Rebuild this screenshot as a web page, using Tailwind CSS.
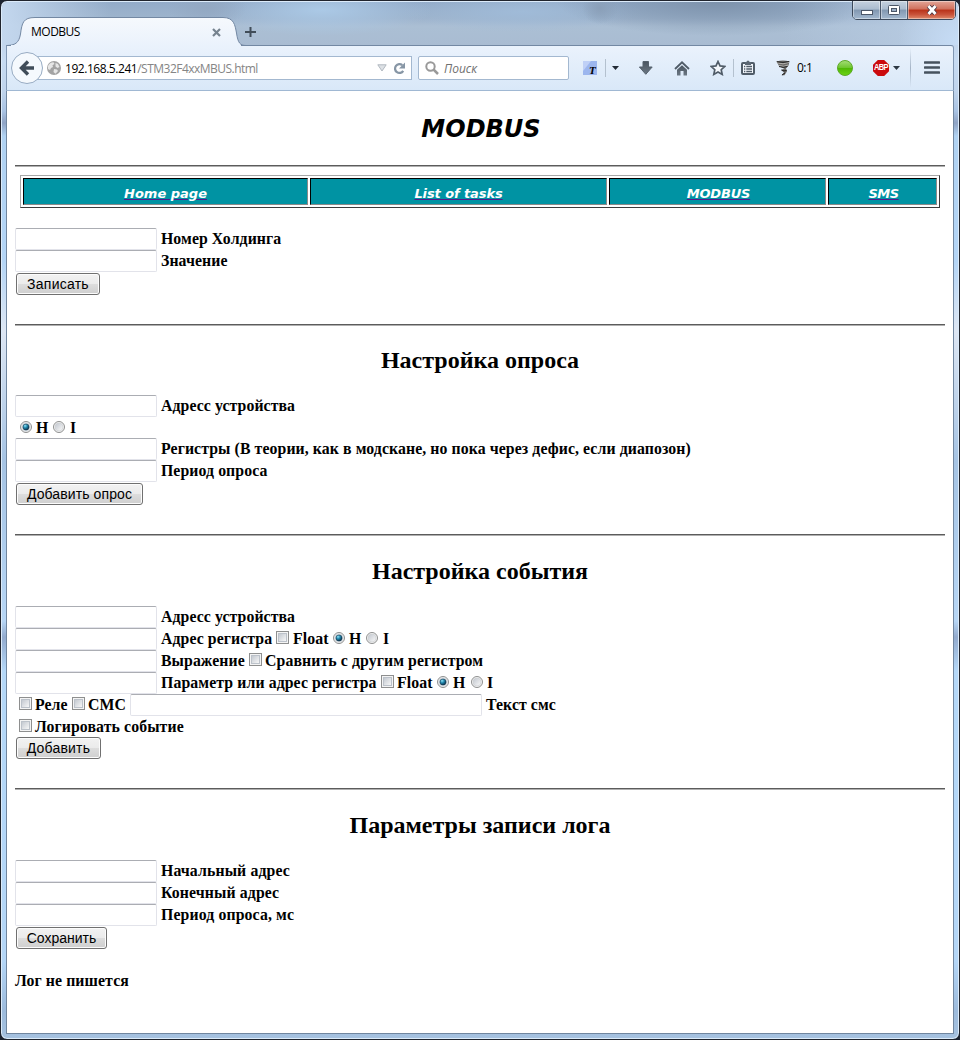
<!DOCTYPE html>
<html lang="ru">
<head>
<meta charset="utf-8">
<title>MODBUS</title>
<script src="https://cdn.jsdelivr.net/npm/@tailwindcss/browser@4"></script>
</head>
<body class="h-[1040px] w-[960px] overflow-hidden bg-[#1c2330]">
<svg class="absolute h-0 w-0">
  <defs>
    <linearGradient id="box" x1="0" y1="0" x2="1" y2="1"><stop offset="0.1" stop-color="#c6cbd2"/><stop offset="1" stop-color="#fafafa"/></linearGradient>
    <radialGradient id="dot" cx=".35" cy=".3" r=".75"><stop offset="0" stop-color="#8fe4f8"/><stop offset=".45" stop-color="#2187ad"/><stop offset="1" stop-color="#07283f"/></radialGradient>
    <linearGradient id="tabfill" x1="0" y1="0" x2="0" y2="1"><stop offset="0" stop-color="#f6f9fd"/><stop offset="1" stop-color="#eaf2fc"/></linearGradient>
    <linearGradient id="green" x1="0" y1="0" x2="0" y2="1"><stop offset="0" stop-color="#a5dd78"/><stop offset=".48" stop-color="#6fc62f"/><stop offset=".52" stop-color="#4fb804"/><stop offset="1" stop-color="#6bd414"/></linearGradient>
    <linearGradient id="ink" x1="0" y1="0" x2="0" y2="1"><stop offset="0" stop-color="#4a5560"/><stop offset="1" stop-color="#6c7884"/></linearGradient>
    <symbol id="check" viewBox="0 0 13 13"><rect x=".5" y=".5" width="12" height="12" fill="#f4f4f4" stroke="#8e8f8f"/><rect x="2.5" y="2.5" width="8" height="8" fill="url(#box)" stroke="#bcc2ca"/></symbol>
    <symbol id="radio" viewBox="0 0 12 12"><circle cx="6" cy="6" r="5.5" fill="#f4f4f4" stroke="#8e8f8f"/><circle cx="6" cy="6" r="4" fill="url(#box)" stroke="#c9ccd0" stroke-width=".6"/></symbol>
    <symbol id="radio-on" viewBox="0 0 12 12"><circle cx="6" cy="6" r="5.5" fill="#f4f4f4" stroke="#8e8f8f"/><circle cx="6" cy="6" r="4.2" fill="#dfe5ea" stroke="#c3c9cf" stroke-width=".5"/><circle cx="6" cy="6" r="3.1" fill="url(#dot)" stroke="#173a52" stroke-width=".6"/></symbol>
  </defs>
</svg>
<div class="flex h-full w-full flex-col overflow-hidden rounded-[7px] border border-[#20242d] bg-[linear-gradient(180deg,#b8c9de_0,#c7dbf2_60px,#c0d4ec_90px,#aac4e4_110px,#8fa3c4_122px,#b0d2f2_135px,#b4d5f6_260px,#dde6f3_330px,#a6c4e4_460px,#b7d6f5_620px,#93abce_636px,#b5d8f8_670px,#b4d6f7_960px,#9dbbdc_1010px,#a6c2e0_100%)] shadow-[inset_0_0_0_1px_#dcebfa]">

  <!-- title bar -->
  <header class="mx-px mt-px flex h-[43px] shrink-0 rounded-t-[6px] bg-[radial-gradient(ellipse_40px_18px_at_205px_6px,#93a8c2_0,#93a8c200_100%),radial-gradient(ellipse_18px_16px_at_598px_6px,#8a9fb8_0,#8a9fb800_100%),radial-gradient(ellipse_160px_34px_at_715px_0px,#7d92ab_0,#7d92ab00_100%),radial-gradient(ellipse_110px_26px_at_320px_8px,#abc9e6_0,#abc9e600_100%),radial-gradient(ellipse_120px_20px_at_520px_10px,#a0bbd8_0,#a0bbd800_100%),radial-gradient(ellipse_60px_60px_at_100%_40px,#c6dcf5_0,#c6dcf500_100%),linear-gradient(90deg,#c3d7ee_0,#a5bcd700_110px,#a5bcd700_780px,#b9cde4_100%),linear-gradient(180deg,#93abc9_0,#9db3cc_16px,#abbfd4_24px,#a9bcd2_100%)]">
    <div class="relative ml-[4px] h-[43px] w-[240px]">
      <svg class="absolute left-0 top-[14px] h-[30px] w-[240px]" viewBox="0 0 240 30" fill="none"><path d="M0 30V29.500C9 29.500 13 27 14.500 18C16 7 17 1.500 29 1.500H217C228 1.500 229 9 230.500 17C232 27 234 29.500 240 29.500V30Z" fill="url(#tabfill)"/><path d="M0 29.500C9 29.500 13 27 14.500 18C16 7 17 1.500 29 1.500H217C228 1.500 229 9 230.500 17C232 27 234 29.500 240 29.500" stroke="#7388a3"/></svg>
      <div class="relative flex h-full items-center justify-between pl-[25px] pr-[25px] pt-[17px] font-['Open_Sans',sans-serif] text-[12px] leading-4 text-black">
        <span class="tracking-[-0.5px]">MODBUS</span>
        <svg class="h-[9px] w-[9px]" viewBox="0 0 9 9"><path d="M1 1L8 8M8 1L1 8" stroke="#76838f" stroke-width="2.200"/></svg>
      </div>
    </div>
    <svg class="ml-[-1px] mt-[25px] h-[10px] w-[11px]" viewBox="0 0 11 10"><path d="M5.500 0V10M0 5H11" stroke="#414d59" stroke-width="2"/></svg>
    <div class="ml-auto mr-[2px] mt-[-2px] flex h-[20px] w-[104px] overflow-hidden rounded-b-[5px] border border-[#3c495b]">
      <div class="flex w-[28px] items-center justify-center border-r border-[#4a586b] bg-[linear-gradient(180deg,#c5d1df_0,#abbccf_45%,#8298b1_50%,#a3b8cf_100%)] shadow-[inset_0_0_0_1px_#ffffff66]"><svg class="mt-[5px] h-[5px] w-[12px]" viewBox="0 0 12 5"><rect x=".5" y=".5" width="11" height="4" fill="#fff" stroke="#4c5768"/></svg></div>
      <div class="flex w-[27px] items-center justify-center border-r border-[#4a586b] bg-[linear-gradient(180deg,#c5d1df_0,#abbccf_45%,#8298b1_50%,#a3b8cf_100%)] shadow-[inset_0_0_0_1px_#ffffff66]"><svg class="h-[10px] w-[12px]" viewBox="0 0 12 10"><rect x=".5" y=".5" width="11" height="9" rx="1" fill="#fff" stroke="#4c5768"/><rect x="3.500" y="3.500" width="5" height="3" fill="#9cafc6" stroke="#4c5768"/></svg></div>
      <div class="flex flex-1 items-center justify-center bg-[linear-gradient(180deg,#e3a698_0,#d0705c_45%,#b93219_50%,#c9533a_75%,#df8b6c_100%)] shadow-[inset_0_0_0_1px_#ffffff66]"><svg class="h-[10px] w-[12px]" viewBox="0 0 12 10"><path d="M2.500 1L9.500 9M9.500 1L2.500 9" stroke="#503a44" stroke-width="4.600"/><path d="M2.500 1L9.500 9M9.500 1L2.500 9" stroke="#fff" stroke-width="2.700"/></svg></div>
    </div>
  </header>

  <!-- navigation toolbar -->
  <nav class="relative mx-[5px] flex h-[46px] shrink-0 items-center rounded-tr-[3px] border border-b-[#a0b8d3] border-l-[#8197b3] border-r-[#8197b3] border-t-[#7388a3] bg-[linear-gradient(180deg,#eaf2fc,#d9e8f8)] font-['Open_Sans',sans-serif] text-[12px]">
    <div class="absolute left-[4px] top-[-1px] h-px w-[230px] bg-[#eaf2fc]"></div>
    <svg class="relative z-10 ml-[4px] h-[32px] w-[32px] shrink-0" viewBox="0 0 32 32"><circle cx="16" cy="16" r="15.500" fill="#f5f9fd" stroke="#97abc2"/><path d="M17 9.500L10.500 16L17 22.500M11 16H23" fill="none" stroke="#414d59" stroke-width="3.400"/></svg>
    <div class="ml-[-6px] flex h-[24px] w-[375px] items-center border border-[#a3b8d0] bg-white pl-[9px] pr-[5px]">
      <svg class="h-[14px] w-[14px] shrink-0" viewBox="0 0 14 14"><circle cx="7" cy="7" r="7" fill="#a3a3a3"/><path d="M1 5C2 2.500 4 1.500 6.500 1.200L7.500 3L5.500 4.200L6 6L4 7L3 9L1 8ZM8.500 2L11 3L12.500 6L10.500 7L8.500 5.500ZM7 8L10 8.500L11 10L8.500 12.800L6.500 11Z" fill="#e6e6e6"/></svg>
      <span class="ml-[4px] whitespace-nowrap pt-px tracking-[-0.52px] text-[#858585]"><span class="tracking-[-0.45px] text-black">192.168.5.241</span>/STM32F4xxMBUS.html</span>
      <svg class="ml-auto h-[8px] w-[10px]" viewBox="0 0 10 8"><path d="M.8 .8H9.200L5 7Z" fill="#dde1e5" stroke="#b1b8c0"/></svg>
      <svg class="ml-[6px] h-[13px] w-[13px]" viewBox="0 0 13 13"><path d="M9.300 3.200A4.400 4.400 0 1 0 10.200 8.800" fill="none" stroke="#8796a5" stroke-width="2.300"/><path d="M12 .5V6.500H6Z" fill="#8796a5"/></svg>
    </div>
    <div class="ml-[6px] flex h-[24px] w-[151px] items-center rounded-[2px] border border-[#a3b8d0] bg-white pl-[6px]">
      <svg class="h-[14px] w-[14px]" viewBox="0 0 14 14"><circle cx="5.500" cy="5.500" r="4.200" fill="none" stroke="#999" stroke-width="2"/><path d="M8.500 8.500L13 13" stroke="#999" stroke-width="2.500"/></svg>
      <span class="ml-[5px] pt-px italic text-[#707070]">Поиск</span>
    </div>
    <svg class="ml-[14px] h-[14px] w-[14px] shrink-0" viewBox="0 0 14 14"><rect width="14" height="14" fill="#9cb6ee"/><path d="M0 0H8L0 10Z" fill="#bfd0f6"/><text x="6" y="13" font-family="Liberation Serif" font-weight="bold" font-style="italic" font-size="11">T</text></svg>
    <div class="ml-[8px] h-[18px] w-px bg-[#b4c1cf]"></div>
    <svg class="ml-[6px] h-[4px] w-[7px]" viewBox="0 0 7 4"><path d="M0 0H7L3.500 4Z" fill="#222b35"/></svg>
    <svg class="ml-[19px] h-[14px] w-[16px]" viewBox="0 0 16 14"><path d="M5 .5H10.500V6H14.200L7.800 13.300L1.400 6H5Z" fill="url(#ink)" stroke="#55616d"/></svg>
    <svg class="ml-[20px] h-[15px] w-[16px]" viewBox="0 0 16 15"><path d="M1 8L8 1.400L15 8" fill="none" stroke="#505c68" stroke-width="1.900"/><path d="M3 8.800L8 4.200L13 8.800V14.500H9.500V10H6.500V14.500H3Z" fill="url(#ink)"/></svg>
    <svg class="ml-[20px] h-[16px] w-[16px]" viewBox="0 0 16 16"><path d="M8 1.500L10 5.900L14.800 6.400L11.200 9.700L12.200 14.400L8 12L3.800 14.400L4.800 9.700L1.200 6.400L6 5.900Z" fill="#f3f7fc" stroke="#505c68" stroke-width="1.700"/></svg>
    <div class="ml-[7px] h-[18px] w-px bg-[#b4c1cf]"></div>
    <svg class="mb-[2px] ml-[7px] h-[15px] w-[14px]" viewBox="0 0 14 15"><rect x="1" y="3" width="12" height="11" rx="1" fill="#f3f7fc" stroke="#505c68" stroke-width="2"/><path d="M4 2H5.200Q7-1 8.800 2H10V5H4Z" fill="#5b6773"/><path d="M3 6.500H4.300M5.300 6.500H11M3 9H4.300M5.300 9H11M3 11.500H4.300M5.300 11.500H11" stroke="#505c68" stroke-width="1.300"/></svg>
    <svg class="ml-[21px] h-[16px] w-[14px]" viewBox="0 0 14 16"><path d="M.5 1.500Q7-.5 13.500 1.500L12.500 5.500L10 8.500L11.200 11L8.500 15.300H5.500L8 12.500L5 10L8.200 8.800L3 6Z" fill="#6d6b69"/><path d="M1 2.800Q7 5 13 2.400M3 5.500Q8 7.300 12 5" fill="none" stroke="#bcbab6" stroke-width=".9"/><path d="M.8 1.700Q7 3.200 13.200 1.500M3 6.500Q7 8.200 11.500 6.500M5.500 10Q8 11.500 10.500 10.500M6 15L9 13" fill="none" stroke="#222"/></svg>
    <span class="ml-[7px] w-[15px] whitespace-nowrap tracking-[-0.5px] text-black">0:1</span>
    <svg class="ml-[25px] h-[16px] w-[16px]" viewBox="0 0 16 16"><circle cx="8" cy="8" r="7.500" fill="url(#green)" stroke="#5da928"/></svg>
    <div class="ml-[20px] flex h-[16px] w-[16px] items-center justify-center bg-[#cb0a0d] [clip-path:polygon(30%_0,70%_0,100%_30%,100%_70%,70%_100%,30%_100%,0_70%,0_30%)]"><span class="scale-y-120 font-['Liberation_Sans',sans-serif] text-[7.5px] font-bold leading-none tracking-[-0.6px] text-white">ABP</span></div>
    <svg class="ml-[4px] h-[4px] w-[7px]" viewBox="0 0 7 4"><path d="M0 0H7L3.500 4Z" fill="#2d3843"/></svg>
    <div class="ml-[10px] h-[40px] w-px bg-[linear-gradient(180deg,#b9c8d900,#a5b4c6_50%,#b9c8d900)]"></div>
    <svg class="mb-[2px] ml-[13px] h-[13px] w-[16px]" viewBox="0 0 16 13"><path d="M1 1.500H15M1 6.500H15M1 11.500H15" stroke="#46525e" stroke-width="2.600" stroke-linecap="round"/></svg>
  </nav>

  <!-- page -->
  <main class="mx-[5px] mb-[5px] flex h-[943px] shrink-0 flex-col border-x border-b border-[#71869f] bg-white px-[8px] font-['Liberation_Serif',serif] text-[15.8px] font-bold leading-[22px] text-black">
    <h1 class="flex h-[74px] items-center justify-center pl-[2px] pt-[2px] font-['DejaVu_Sans',sans-serif] text-[24px] font-bold italic">MODBUS</h1>
    <div class="h-[2px] shrink-0 border-t border-[#5c5c5c] bg-[#b0b0b0]"></div>
    <table class="mx-[5px] mt-[8px] h-[33px] w-[920px] table-fixed border-separate border-spacing-[2px] border border-b-[#3c3c3c] border-l-[#a8a8a8] border-r-[#3c3c3c] border-t-[#a8a8a8] text-center font-['DejaVu_Sans',sans-serif] text-[13px] italic leading-[21px] text-white">
      <tr>
        <td class="w-[285px] border border-b-[#8a8a8a] border-l-black border-r-[#8a8a8a] border-t-black bg-[#0093a3] px-0 pb-0 pt-[4px]"><a class="underline decoration-[#551a8b] decoration-1 underline-offset-1">Home page</a></td>
        <td class="w-[297px] border border-b-[#8a8a8a] border-l-black border-r-[#8a8a8a] border-t-black bg-[#0093a3] px-0 pb-0 pt-[4px]"><a class="tracking-[-0.1px] underline decoration-[#551a8b] decoration-1 underline-offset-1">List of tasks</a></td>
        <td class="w-[217px] border border-b-[#8a8a8a] border-l-black border-r-[#8a8a8a] border-t-black bg-[#0093a3] pb-0 pl-[2px] pr-0 pt-[4px]"><a class="tracking-[-0.2px] underline decoration-[#551a8b] decoration-1 underline-offset-1">MODBUS</a></td>
        <td class="border border-b-[#8a8a8a] border-l-black border-r-[#8a8a8a] border-t-black bg-[#0093a3] pb-0 pl-[2px] pr-0 pt-[4px]"><a class="tracking-[-0.5px] underline decoration-[#551a8b] decoration-1 underline-offset-1">SMS</a></td>
      </tr>
    </table>

    <form class="mt-[20px] flex flex-col items-start tracking-[0.08px]">
      <label class="flex h-[22px] items-center"><input class="mr-[4px] h-[22px] w-[142px] rounded-[2px] border border-[#e2e3ea] border-t-[#abadb3] bg-white">Номер Холдинга</label>
      <label class="flex h-[22px] items-center"><input class="mr-[4px] h-[22px] w-[142px] rounded-[2px] border border-[#e2e3ea] border-t-[#abadb3] bg-white">Значение</label>
      <button type="button" class="ml-px mt-px h-[22px] w-[84px] rounded-[3px] border border-[#707070] bg-[linear-gradient(180deg,#f2f2f2_0,#ebebeb_50%,#dddddd_50%,#cfcfcf_100%)] font-['Liberation_Sans',sans-serif] text-[14px] font-normal leading-[20px] tracking-[0.25px] shadow-[inset_0_0_0_1px_#fcfcfc]">Записать</button>
    </form>
    <div class="mt-[29px] h-[2px] shrink-0 border-t border-[#5c5c5c] bg-[#b0b0b0]"></div>

    <h2 class="mt-[20px] h-[28px] text-center text-[24px] leading-[28px]">Настройка опроса</h2>
    <form class="mt-[21px] flex flex-col items-start tracking-[0.08px]">
      <label class="flex h-[22px] items-center"><input class="mr-[4px] h-[22px] w-[142px] rounded-[2px] border border-[#e2e3ea] border-t-[#abadb3] bg-white">Адресс устройства</label>
      <div class="flex h-[21px] items-center pl-[5px]"><svg class="mb-[2px] h-[12px] w-[12px]"><use href="#radio-on"/></svg><span class="ml-[4px] w-[17px]">H</span><svg class="mb-[2px] h-[12px] w-[12px]"><use href="#radio"/></svg><span class="ml-[5px]">I</span></div>
      <label class="flex h-[22px] items-center"><input class="mr-[4px] h-[22px] w-[142px] rounded-[2px] border border-[#e2e3ea] border-t-[#abadb3] bg-white"><span class="tracking-[0.09px]">Регистры (В теории, как в модскане, но пока через дефис, если диапозон)</span></label>
      <label class="flex h-[22px] items-center"><input class="mr-[4px] h-[22px] w-[142px] rounded-[2px] border border-[#e2e3ea] border-t-[#abadb3] bg-white">Период опроса</label>
      <button type="button" class="ml-px mt-px h-[22px] w-[127px] rounded-[3px] border border-[#707070] bg-[linear-gradient(180deg,#f2f2f2_0,#ebebeb_50%,#dddddd_50%,#cfcfcf_100%)] font-['Liberation_Sans',sans-serif] text-[14px] font-normal leading-[20px] tracking-[0.1px] shadow-[inset_0_0_0_1px_#fcfcfc]">Добавить опрос</button>
    </form>
    <div class="mt-[29px] h-[2px] shrink-0 border-t border-[#5c5c5c] bg-[#b0b0b0]"></div>

    <h2 class="mt-[21px] h-[28px] text-center text-[24px] leading-[28px]">Настройка события</h2>
    <form class="mt-[21px] flex flex-col items-start tracking-[0.08px]">
      <label class="flex h-[22px] items-center"><input class="mr-[4px] h-[22px] w-[142px] rounded-[2px] border border-[#e2e3ea] border-t-[#abadb3] bg-white">Адресс устройства</label>
      <div class="flex h-[22px] items-center"><input class="mr-[4px] h-[22px] w-[142px] rounded-[2px] border border-[#e2e3ea] border-t-[#abadb3] bg-white"><span class="w-[115px] whitespace-nowrap">Адрес регистра</span><svg class="mb-[3px] h-[13px] w-[13px]"><use href="#check"/></svg><span class="ml-[4px] w-[40px]">Float</span><svg class="mb-[2px] h-[12px] w-[12px]"><use href="#radio-on"/></svg><span class="ml-[4px] w-[17px]">H</span><svg class="mb-[2px] h-[12px] w-[12px]"><use href="#radio"/></svg><span class="ml-[5px]">I</span></div>
      <div class="flex h-[22px] items-center"><input class="mr-[4px] h-[22px] w-[142px] rounded-[2px] border border-[#e2e3ea] border-t-[#abadb3] bg-white"><span class="w-[88px] whitespace-nowrap">Выражение</span><svg class="mb-[3px] h-[13px] w-[13px]"><use href="#check"/></svg><span class="ml-[3px] tracking-[0.1px]">Сравнить с другим регистром</span></div>
      <div class="flex h-[22px] items-center"><input class="mr-[4px] h-[22px] w-[142px] rounded-[2px] border border-[#e2e3ea] border-t-[#abadb3] bg-white"><span class="w-[220px] whitespace-nowrap tracking-[0.1px]">Параметр или адрес регистра</span><svg class="mb-[3px] h-[13px] w-[13px]"><use href="#check"/></svg><span class="ml-[3px] w-[40px]">Float</span><svg class="mb-[2px] h-[12px] w-[12px]"><use href="#radio-on"/></svg><span class="ml-[4px] w-[18px]">H</span><svg class="mb-[2px] h-[12px] w-[12px]"><use href="#radio"/></svg><span class="ml-[4px]">I</span></div>
      <div class="flex h-[22px] items-center pl-[4px]"><svg class="mb-[3px] h-[13px] w-[13px]"><use href="#check"/></svg><span class="ml-[3px] w-[37px] whitespace-nowrap">Реле</span><svg class="mb-[3px] h-[13px] w-[13px]"><use href="#check"/></svg><span class="ml-[3px] w-[42px]">СМС</span><input class="mr-[4px] h-[22px] w-[352px] rounded-[2px] border border-[#e2e3ea] border-t-[#abadb3] bg-white">Текст смс</div>
      <div class="flex h-[21px] items-center pl-[4px] pt-px"><svg class="mb-[3px] h-[13px] w-[13px]"><use href="#check"/></svg><span class="ml-[3px] tracking-[0.1px]">Логировать событие</span></div>
      <button type="button" class="ml-px h-[22px] w-[85px] rounded-[3px] border border-[#707070] bg-[linear-gradient(180deg,#f2f2f2_0,#ebebeb_50%,#dddddd_50%,#cfcfcf_100%)] font-['Liberation_Sans',sans-serif] text-[14px] font-normal leading-[20px] tracking-[0.2px] shadow-[inset_0_0_0_1px_#fcfcfc]">Добавить</button>
    </form>
    <div class="mt-[29px] h-[2px] shrink-0 border-t border-[#5c5c5c] bg-[#b0b0b0]"></div>

    <h2 class="mt-[21px] h-[28px] text-center text-[24px] leading-[28px]">Параметры записи лога</h2>
    <form class="mt-[21px] flex flex-col items-start tracking-[0.12px]">
      <label class="flex h-[22px] items-center"><input class="mr-[4px] h-[22px] w-[142px] rounded-[2px] border border-[#e2e3ea] border-t-[#abadb3] bg-white">Начальный адрес</label>
      <label class="flex h-[22px] items-center"><input class="mr-[4px] h-[22px] w-[142px] rounded-[2px] border border-[#e2e3ea] border-t-[#abadb3] bg-white">Конечный адрес</label>
      <label class="flex h-[22px] items-center"><input class="mr-[4px] h-[22px] w-[142px] rounded-[2px] border border-[#e2e3ea] border-t-[#abadb3] bg-white">Период опроса, мс</label>
      <button type="button" class="ml-px mt-px h-[22px] w-[91px] rounded-[3px] border border-[#707070] bg-[linear-gradient(180deg,#f2f2f2_0,#ebebeb_50%,#dddddd_50%,#cfcfcf_100%)] font-['Liberation_Sans',sans-serif] text-[14px] font-normal leading-[20px] tracking-[0px] shadow-[inset_0_0_0_1px_#fcfcfc]">Сохранить</button>
    </form>
    <p class="mt-[21px] tracking-[0.1px]">Лог не пишется</p>
  </main>
</div>
</body>
</html>
